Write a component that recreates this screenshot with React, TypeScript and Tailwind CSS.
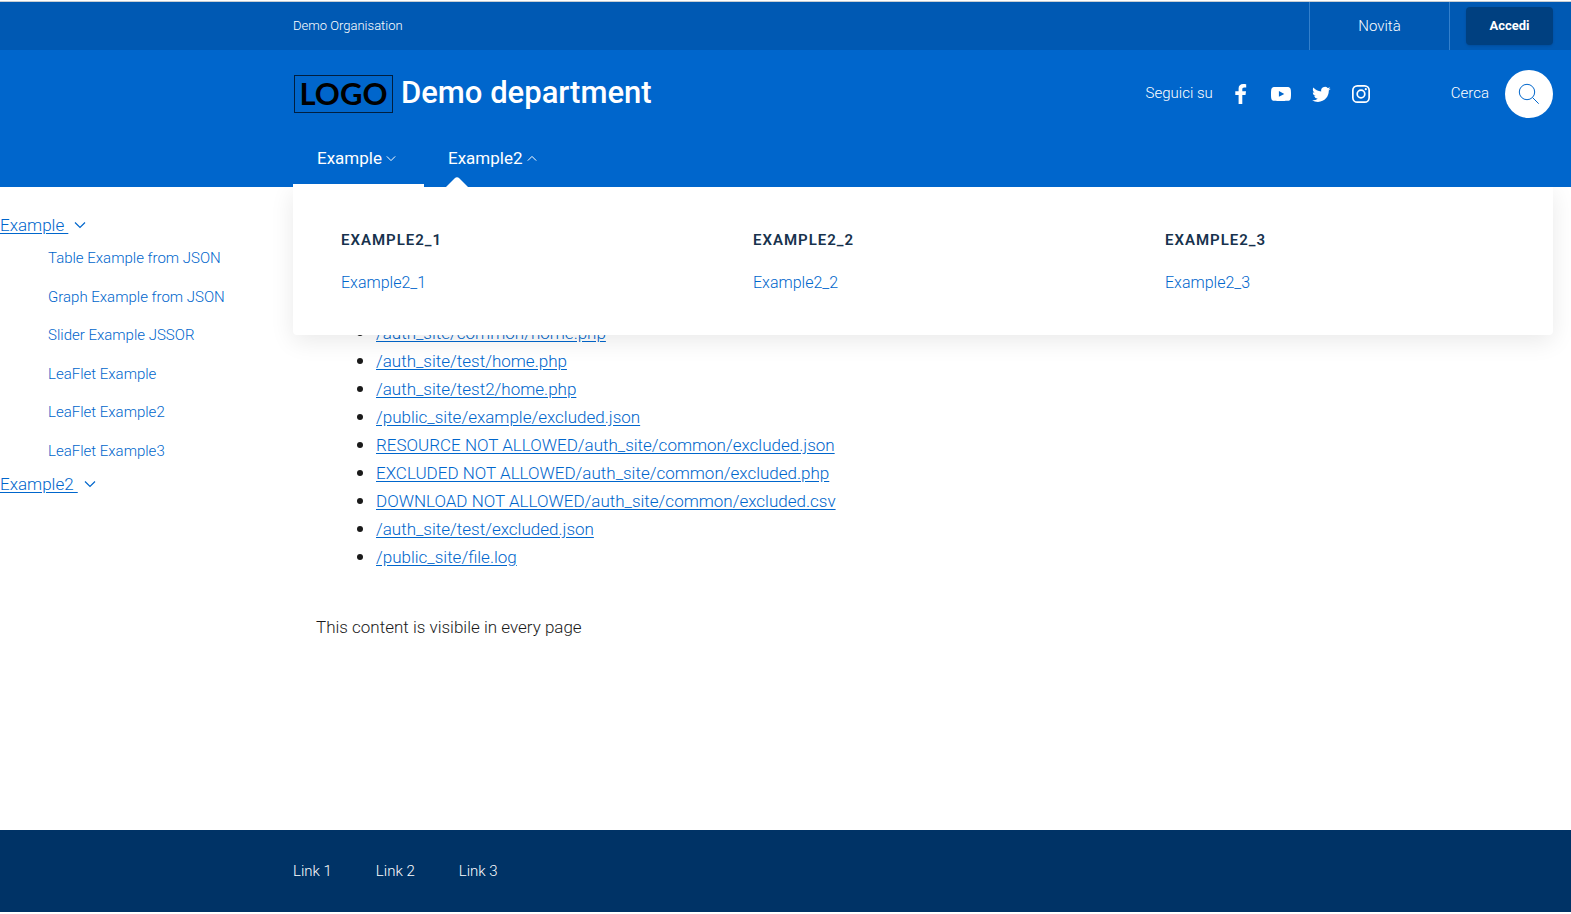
import React from "react";

const sideLinks = [
  "Table Example from JSON",
  "Graph Example from JSON",
  "Slider Example JSSOR",
  "LeaFlet Example",
  "LeaFlet Example2",
  "LeaFlet Example3",
];

const resources = [
  "/auth_site/common/home.php",
  "/auth_site/test/home.php",
  "/auth_site/test2/home.php",
  "/public_site/example/excluded.json",
  "RESOURCE NOT ALLOWED/auth_site/common/excluded.json",
  "EXCLUDED NOT ALLOWED/auth_site/common/excluded.php",
  "DOWNLOAD NOT ALLOWED/auth_site/common/excluded.csv",
  "/auth_site/test/excluded.json",
  "/public_site/file.log",
];

const megaColumns = ["Example2_1", "Example2_2", "Example2_3"];

function Chevron({ up = false, className }: { up?: boolean; className: string }) {
  return (
    <svg viewBox="0 0 12 8" className={className} fill="none" stroke="currentColor" strokeWidth="1.200" aria-hidden="true">
      <path d={up ? "M1 6.5 6 1.5l5 5" : "M1 1.5l5 5 5-5"} />
    </svg>
  );
}

function SocialLinks() {
  const link = "block size-6";
  const svg = "size-6";
  return (
    <div className="flex items-center gap-4">
      <a href="#facebook" aria-label="Facebook" className={link}>
        <svg viewBox="0 0 24 24" className={svg} fill="currentColor">
          <path d="M9.600 22v-9.100H6.300V9.200h3.300V6.600C9.600 3.500 11.400 2 14.200 2c1.400 0 2.500.1 3 .2v3.200h-2c-1.500 0-1.900.8-1.900 1.900v1.900h3.700l-.5 3.700h-3.200V22z" />
        </svg>
      </a>
      <a href="#youtube" aria-label="YouTube" className={link}>
        <svg viewBox="0 0 24 24" className={svg} fill="currentColor">
          <path
            fillRule="evenodd"
            d="M21.800 8s-.2-1.400-.8-2c-.8-.8-1.600-.8-2-.9C16.200 5 12 5 12 5s-4.200 0-7 .1c-.4.1-1.200.1-2 .9-.6.600-.8 2-.8 2S2 9.600 2 11.200v1.500c0 1.700.2 3.300.2 3.300s.2 1.400.8 2c.8.8 1.800.8 2.200.8 1.600.2 6.800.2 6.800.2s4.200 0 7-.2c.4 0 1.200 0 2-.8.6-.6.8-2 .8-2s.2-1.600.2-3.300v-1.500c0-1.600-.2-3.200-.2-3.200zM9.900 14.800V9.100l5.400 2.900z"
          />
        </svg>
      </a>
      <a href="#twitter" aria-label="Twitter" className={link}>
        <svg viewBox="-4 -4 31 31" className={svg} fill="currentColor">
          <path d="M23.953 4.57a10 10 0 01-2.825.775 4.958 4.958 0 002.163-2.723c-.951.555-2.005.959-3.127 1.184a4.92 4.92 0 00-8.384 4.482C7.69 8.095 4.067 6.13 1.64 3.162a4.822 4.822 0 00-.666 2.475c0 1.71.87 3.213 2.188 4.096a4.904 4.904 0 01-2.228-.616v.06a4.923 4.923 0 003.946 4.827 4.996 4.996 0 01-2.212.085 4.936 4.936 0 004.604 3.417 9.867 9.867 0 01-6.102 2.105c-.39 0-.779-.023-1.17-.067a13.995 13.995 0 007.557 2.209c9.053 0 13.998-7.496 13.998-13.985 0-.21 0-.42-.015-.63A9.935 9.935 0 0024 4.59z" />
        </svg>
      </a>
      <a href="#instagram" aria-label="Instagram" className={link}>
        <svg viewBox="0 0 24 24" className={svg} fill="none" stroke="currentColor" strokeWidth="1.700">
          <rect x="3.850" y="3.850" width="16.300" height="16.300" rx="4.500" />
          <circle cx="12" cy="12" r="3.800" />
          <circle cx="16.800" cy="7.200" r="1.100" fill="currentColor" stroke="none" />
        </svg>
      </a>
    </div>
  );
}

function Header() {
  return (
    <header className="relative z-10 text-white">
      <div className="mt-px flex h-[49px] items-stretch justify-between border-t border-[#c8cdd2] bg-[#0059b3] pr-[18px] pl-[293px]">
        <a href="#organisation" className="self-center text-[13px] font-light">
          Demo Organisation
        </a>
        <div className="flex items-stretch">
          <a
            href="#novita"
            className="flex w-[141px] items-center justify-center border-x border-[#3380cc] text-[15px] font-light"
          >
            Novità
          </a>
          <button
            type="button"
            className="ml-4 h-[38px] w-[87px] self-center rounded bg-[#004080] text-[13px] font-bold shadow-sm"
          >
            Accedi
          </button>
        </div>
      </div>

      <div className="bg-[#0066cc]">
        <div className="flex h-[87px] items-center justify-between pr-[18px] pl-[293px]">
          <a href="#home" className="ml-px flex items-center gap-2">
            <span className="flex h-[38px] w-[99px] items-center justify-center border border-[#001f40] font-['Lato'] text-[31px] font-bold text-black">
              LOGO
            </span>
            <span className="text-[31px] font-medium">Demo department</span>
          </a>
          <div className="flex items-center text-[15px] font-light">
            <div className="flex items-center gap-4">
              <span>Seguici su</span>
              <SocialLinks />
            </div>
            <div className="ml-[78px] flex items-center gap-4">
              <span>Cerca</span>
              <button
                type="button"
                aria-label="Cerca"
                className="flex size-12 items-center justify-center rounded-full bg-white text-[#0066cc]"
              >
                <svg viewBox="0 0 24 24" className="size-6" fill="none" stroke="currentColor">
                  <circle cx="10" cy="10" r="7.700" />
                  <path d="m15.500 15.500 6.200 6.200" />
                </svg>
              </button>
            </div>
          </div>
        </div>

        <div className="relative pr-[18px] pl-[293px]">
          <nav className="flex h-[50px] text-[17px]" aria-label="Main">
            <button
              type="button"
              aria-expanded="false"
              className="flex w-[131px] items-center gap-1 border-b-[3px] border-white pb-1 pl-6"
            >
              Example
              <Chevron className="h-[7px] w-[10px]" />
            </button>
            <button
              type="button"
              aria-expanded="true"
              className="relative flex items-center gap-1 border-b-[3px] border-transparent px-6 pb-1"
            >
              Example2
              <Chevron up className="h-[7px] w-[10px]" />
              <svg viewBox="0 0 22 10" className="absolute -bottom-[3px] left-[22px] h-[10px] w-[22px]" aria-hidden="true">
                <path d="M0 10 8.500 1.500Q11-.8 13.500 1.500L22 10z" fill="#fff" />
              </svg>
            </button>
          </nav>
          <div className="absolute top-full right-[18px] left-[293px] grid h-[148px] grid-cols-3 rounded-b bg-white px-3 pt-[39px] shadow-[0_6px_24px_rgba(0,0,0,0.09)] [clip-path:inset(0_-40px_-40px_-40px)]">
            {megaColumns.map((name) => (
              <section key={name} className="pl-9">
                <h3 className="text-[15px] leading-7 font-semibold tracking-[1px] text-[#17324d] uppercase">
                  {name}
                </h3>
                <a href={"#" + name} className="mt-[17px] block text-base leading-6 font-light text-[#0066cc]">
                  {name}
                </a>
              </section>
            ))}
          </div>
        </div>
      </div>
    </header>
  );
}

function SidebarHeading({ label }: { label: string }) {
  return (
    <a href="#section" className="flex items-center gap-1.5 text-[17px] leading-7">
      <span className="whitespace-pre underline underline-offset-2">{label + " "}</span>
      <Chevron className="h-2 w-3" />
    </a>
  );
}

function Sidebar() {
  return (
    <aside className="w-[293px] shrink-0 pt-6 font-light text-[#0066cc]">
      <SidebarHeading label="Example" />
      <ul className="grid h-[231px] grid-rows-6 pl-12 text-[15px]">
        {sideLinks.map((label) => (
          <li key={label} className="flex items-center">
            <a href="#page">{label}</a>
          </li>
        ))}
      </ul>
      <SidebarHeading label="Example2" />
    </aside>
  );
}

export default function App() {
  return (
    <div className="flex min-h-screen flex-col bg-white pb-0.5 font-['Roboto','Liberation_Sans',sans-serif] text-[#1a1a1a]">
      <Header />
      <div className="flex grow">
        <Sidebar />
        <main className="grow pt-[131px] pl-[23px] text-[17px] leading-7 font-light">
          <ul className="list-disc pl-[60px] marker:text-[20px]">
            {resources.map((path) => (
              <li key={path} className="h-7">
                <a href="#resource" className="text-[#0066cc] underline underline-offset-2">
                  {path}
                </a>
              </li>
            ))}
          </ul>
          <p className="mt-[43px]">This content is visibile in every page</p>
        </main>
      </div>
      <footer className="flex h-[82px] items-center gap-11 bg-[#003366] pl-[293px] text-[15px] font-light text-white">
        <a href="#link1">Link 1</a>
        <a href="#link2">Link 2</a>
        <a href="#link3">Link 3</a>
      </footer>
    </div>
  );
}
